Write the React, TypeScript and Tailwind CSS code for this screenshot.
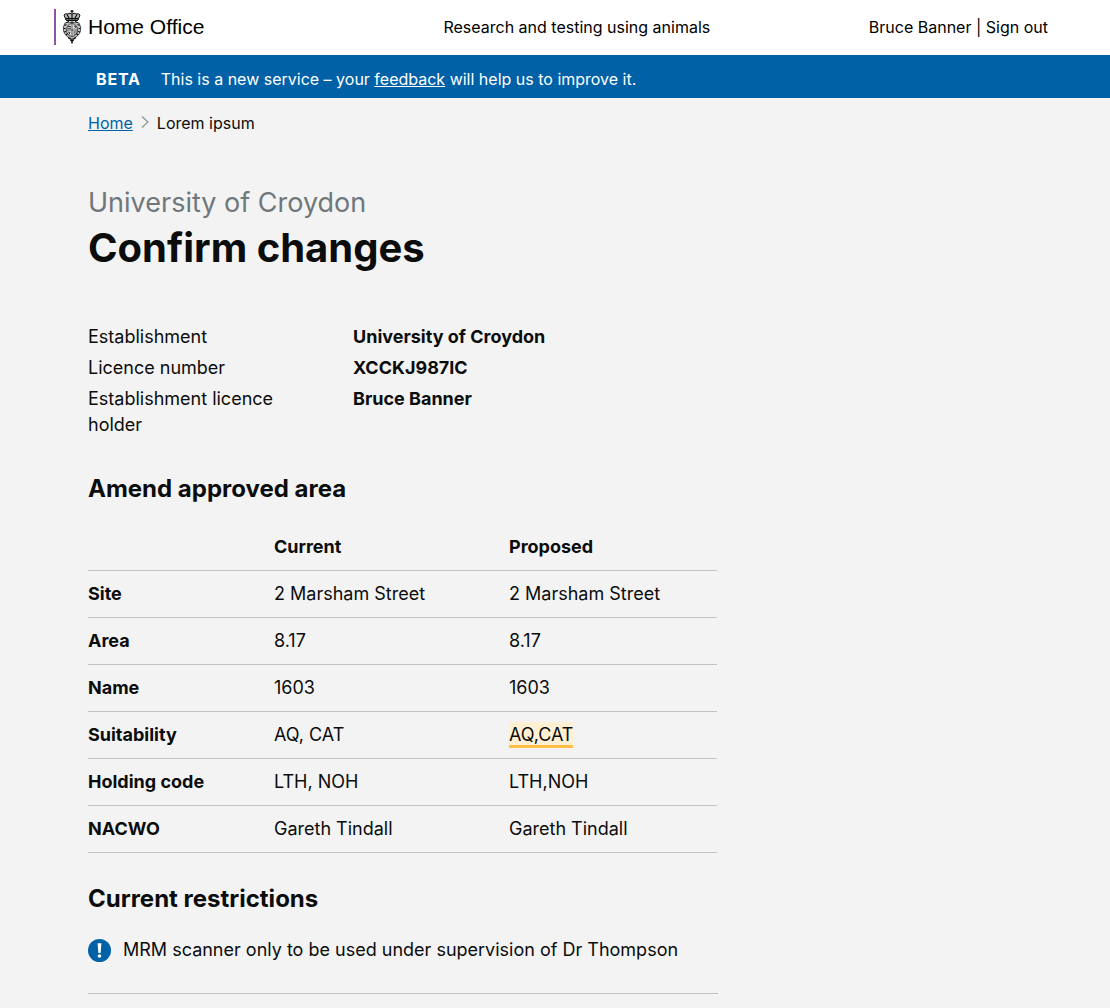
const details = [
  ['Establishment', 'University of Croydon'],
  ['Licence number', 'XCCKJ987IC'],
  ['Establishment licence holder', 'Bruce Banner'],
];

const rows = [
  { label: 'Site', current: '2 Marsham Street', proposed: '2 Marsham Street' },
  { label: 'Area', current: '8.17', proposed: '8.17' },
  { label: 'Name', current: '1603', proposed: '1603' },
  { label: 'Suitability', current: 'AQ, CAT', proposed: 'AQ,CAT', changed: true },
  { label: 'Holding code', current: 'LTH, NOH', proposed: 'LTH,NOH' },
  { label: 'NACWO', current: 'Gareth Tindall', proposed: 'Gareth Tindall' },
];

function Crest() {
  return (
    <svg viewBox="0 0 20 34" className="h-[34px] w-5" fill="none" stroke="#0b0c0c" aria-hidden="true">
      {/* Crown */}
      <path d="M10 0v3M8.500 1.200h3" strokeWidth="1.200" />
      <path d="M4 10 2 5Q3 3 5.500 4Q8 2.500 10 4Q12 2.500 14.500 4Q17 3 18 5L16 10Z" fill="#0b0c0c" fillOpacity=".3" strokeWidth="1" />
      <path d="M5 4.500 7.500 9M15 4.500 12.500 9M10 4v5M4 8.500h12M4 10.500h12" strokeWidth="1.100" />
      <path d="M4.500 12.500 7 11.500M15.500 12.500 13 11.500M10 11v2" strokeWidth="1" />
      {/* Garter and shield */}
      <path d="M3 13Q6 11.500 10 12.500Q14 11.500 17 13Q19.500 17 18.500 21Q17 26.500 10 29Q3 26.500 1.500 21Q.5 17 3 13Z" fill="#0b0c0c" fillOpacity=".25" strokeWidth=".8" strokeOpacity=".85" />
      <ellipse cx="10" cy="20" rx="5.500" ry="6.500" fill="#fff" fillOpacity=".45" strokeWidth=".7" />
      <path d="M10 14v12M4.500 20h11" strokeWidth=".6" />
      <path d="M6 16.500h3M5.500 18.300h3.500M11.500 22h3M11.500 24h2M12 16l2 1-1.500 1.500M6 22l2 .5-1 2" strokeWidth=".8" />
      <path d="M2.500 15.500l2-1M1.500 18.500h2M2 22l2-.5M4 25l1.500-1.500M17.500 15.500l-2-1M18.500 18.500h-2M18 22l-2-.5M16 25l-1.500-1.500" strokeWidth="1.100" />
      {/* Pendant */}
      <path d="M6 27.500 9 29.500M14 27.500 11 29.500M8.200 30.500h3.600M9 32h2M10 29v4.500" strokeWidth="1.200" />
    </svg>
  );
}

export default function App() {
  return (
    <div className="min-h-screen bg-[#f3f3f3] font-['Inter',sans-serif] text-lg leading-[26px] text-[#0b0c0c]">
      <header className="grid h-[55px] grid-cols-[390fr_426fr_178fr] items-center bg-white pr-[62px] pb-0.5 pl-[54px] text-base text-black">
        <a href="#" className="flex h-9 items-center gap-1.5 border-l-2 border-[#8f53a1] pl-1.5 font-['Liberation_Sans',sans-serif] text-[21px]">
          <Crest />
          Home Office
        </a>
        <p className="whitespace-nowrap">Research and testing using animals</p>
        <p className="whitespace-nowrap text-right"><a href="#">Bruce Banner</a> | <a href="#">Sign out</a></p>
      </header>
      <div className="flex h-[43px] items-center gap-5 bg-[#0061a6] px-24 pt-1 text-base text-white">
        <strong className="tracking-wider">BETA</strong>
        <p>This is a new service – your <a href="#" className="underline">feedback</a> will help us to improve it.</p>
      </div>
      <main className="px-[88px] pt-[13px]">
        <nav aria-label="Breadcrumb" className="flex items-center text-base">
          <a href="#" className="text-[#0061a6] underline">Home</a>
          <svg viewBox="0 0 8 12" className="mx-2 mb-0.5 h-3 w-2" fill="none" stroke="#8f9498" strokeWidth="1.200" aria-hidden="true"><path d="m1 .5 6 5.500-6 5.500" /></svg>
          <span>Lorem ipsum</span>
        </nav>
        <p className="mt-[52px] text-[27px] leading-8 text-[#6f777b]">University of Croydon</p>
        <h1 className="mt-1 text-[40px] leading-[50px] font-bold">Confirm changes</h1>
        <dl className="mt-[51px] flex max-w-[630px] flex-col gap-[5px]">
          {details.map(([term, value]) => (
            <div key={term} className="flex gap-[55px]">
              <dt className="w-[210px]">{term}</dt>
              <dd className="font-bold">{value}</dd>
            </div>
          ))}
        </dl>
        <h2 className="mt-9 text-2xl leading-[30px] font-bold">Amend approved area</h2>
        <table className="mt-5 w-full max-w-[629px] table-fixed text-left">
          <colgroup><col className="w-[186px]" /><col className="w-[235px]" /><col /></colgroup>
          <thead>
            <tr className="border-b border-[#bfc1c3]">
              <td /><th scope="col" className="py-2.5">Current</th><th scope="col">Proposed</th>
            </tr>
          </thead>
          <tbody>
            {rows.map((row) => (
              <tr key={row.label} className="border-b border-[#bfc1c3]">
                <th scope="row" className="py-2.5">{row.label}</th>
                <td>{row.current}</td>
                <td><span className={row.changed ? 'border-b-3 border-[#ffbf47] bg-[#fff0d3] pt-0.5' : ''}>{row.proposed}</span></td>
              </tr>
            ))}
          </tbody>
        </table>
        <section className="max-w-[630px] border-b border-[#bfc1c3] pb-[30px]">
          <h2 className="mt-[31px] text-2xl leading-[30px] font-bold">Current restrictions</h2>
          <p className="mt-[23px] flex items-center gap-3">
            <svg viewBox="0 0 24 24" className="size-[23px] shrink-0" aria-hidden="true"><circle cx="12" cy="12" r="12" fill="#0061a6" /><path d="M10 4.500h4l-.8 10h-2.400z" fill="white" /><circle cx="12" cy="17.700" r="1.900" fill="white" /></svg>
            MRM scanner only to be used under supervision of Dr Thompson
          </p>
        </section>
      </main>
    </div>
  );
}
